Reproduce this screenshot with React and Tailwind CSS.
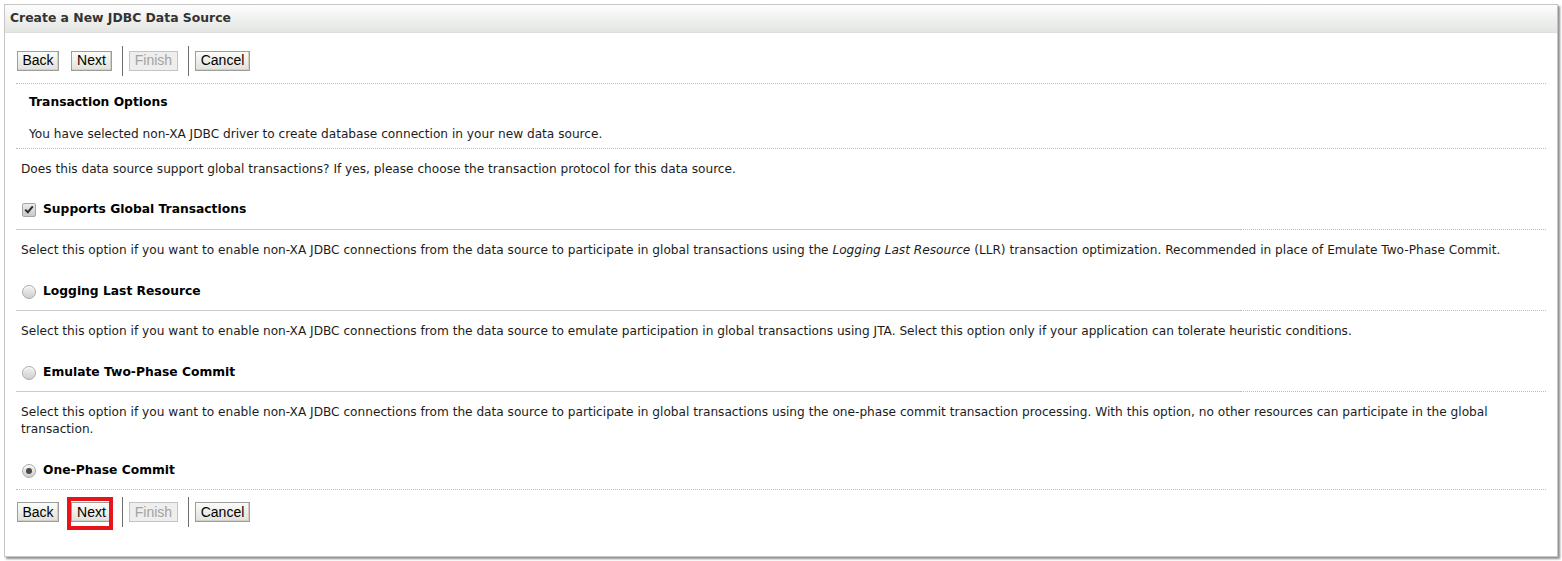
import React from "react";

const REG = "font-['DejaVu_Sans',sans-serif] text-[12.15px] leading-[17px] text-[#1c1c1c]";
const BOLD = "font-['DejaVu_Sans',sans-serif] text-[12.3px] leading-[17px] font-bold text-black";

function Btn({ w, children, disabled }) {
  return (
    <div
      className={`flex h-[20px] items-center justify-center border font-['Liberation_Sans',Arial,sans-serif] text-[14px] ${w} ${
        disabled
          ? "border-[#c4c4c4] bg-[#eeeeec] text-[#a3a3a3]"
          : "border-[#9d9d9d] bg-gradient-to-b from-[#fbfbf8] to-[#e2e2dc] text-black shadow-[inset_-1px_-1px_0_#d0d0c8]"
      }`}
    >
      {children}
    </div>
  );
}

function Sep() {
  return <div className="h-[30px] w-px bg-[#6e6e6e]" />;
}

function ButtonRow({ highlight }) {
  return (
    <div className="relative flex items-center pl-[12px]">
      <Btn w="w-[42px]">Back</Btn>
      <div className="ml-[12px]">
        <Btn w="w-[41px]">Next</Btn>
      </div>
      <div className="ml-[10px]">
        <Sep />
      </div>
      <div className="ml-[6px]">
        <Btn w="w-[49px]" disabled>
          Finish
        </Btn>
      </div>
      <div className="ml-[10px]">
        <Sep />
      </div>
      <div className="ml-[6px]">
        <Btn w="w-[55px]">Cancel</Btn>
      </div>
      {highlight && (
        <div className="absolute left-[62px] top-0 h-[33px] w-[46px] border-[4px] border-[#e8141c]" />
      )}
    </div>
  );
}

function Dotted() {
  return <div className="mx-[11px] border-t border-dotted border-[#bdbdbd]" />;
}

function SplitLine() {
  return (
    <div className="mx-[11px] flex">
      <div className="w-[1224px] border-t border-solid border-[#cccccc]" />
      <div className="flex-1 border-t border-dotted border-[#bdbdbd]" />
    </div>
  );
}

function Radio({ checked }) {
  return (
    <div className="flex h-[14px] w-[14px] items-center justify-center rounded-full border border-[#a9a9a9] bg-gradient-to-b from-[#f2f2f2] to-[#cfcfcf] shadow-[inset_0_1px_1px_#fff]">
      {checked && <div className="h-[6px] w-[6px] rounded-full bg-[#4a4a4a]" />}
    </div>
  );
}

function Checkbox() {
  return (
    <div className="flex h-[14px] w-[14px] items-center justify-center rounded-[2px] border border-[#a5a5a5] bg-gradient-to-b from-[#ececec] to-[#c9c9c9]">
      <svg width="10" height="9" viewBox="0 0 10 9">
        <path d="M1.2 4.6 L3.8 7.2 L8.8 1.4" fill="none" stroke="#2a2a2a" strokeWidth="2" />
      </svg>
    </div>
  );
}

function OptionRow({ control, label, pt }) {
  return (
    <div className={`flex h-[17px] items-center pl-[17px] ${pt}`}>
      <div className="flex w-[21px] items-center">{control}</div>
      <span className={BOLD}>{label}</span>
    </div>
  );
}

export default function App() {
  return (
    <div className="h-[561px] w-[1562px] bg-white pl-[4px] pt-[4px]">
      <div className="h-[553px] w-[1554px] border border-[#c6c6c6] bg-white shadow-[2px_2px_2px_#8f8f8f]">
        <div className="flex h-[28px] items-center border-b border-[#dcdfdb] bg-gradient-to-b from-[#fdfdfd] to-[#e3e6e2] pl-[5px]">
          <span className="font-['DejaVu_Sans',sans-serif] text-[12.4px] font-bold text-[#333333]">
            Create a New JDBC Data Source
          </span>
        </div>

        <div className="flex h-[50px] items-center pt-[5px]">
          <ButtonRow />
        </div>
        <Dotted />

        <div className={`pl-[24px] pt-[10px] ${BOLD}`}>Transaction Options</div>
        <div className={`pl-[24px] pt-[15px] ${REG}`}>
          You have selected non-XA JDBC driver to create database connection in your new data source.
        </div>
        <div className="pt-[5px]">
          <Dotted />
        </div>
        <div className={`pl-[16px] pt-[12px] ${REG}`}>
          Does this data source support global transactions? If yes, please choose the transaction protocol for this data source.
        </div>

        <OptionRow pt="mt-[23px]" control={<Checkbox />} label="Supports Global Transactions" />
        <div className="pt-[11px]">
          <SplitLine />
        </div>
        <div className={`pl-[16px] pt-[12px] ${REG}`}>
          Select this option if you want to enable non-XA JDBC connections from the data source to participate in global
          transactions using the <i>Logging Last Resource</i> (LLR) transaction optimization. Recommended in place of
          Emulate Two-Phase Commit.
        </div>

        <OptionRow pt="mt-[24px]" control={<Radio />} label="Logging Last Resource" />
        <div className="pt-[10px]">
          <SplitLine />
        </div>
        <div className={`pl-[16px] pt-[12px] ${REG}`}>
          Select this option if you want to enable non-XA JDBC connections from the data source to emulate participation in
          global transactions using JTA. Select this option only if your application can tolerate heuristic conditions.
        </div>

        <OptionRow pt="mt-[24px]" control={<Radio />} label="Emulate Two-Phase Commit" />
        <div className="pt-[10px]">
          <SplitLine />
        </div>
        <div className={`pl-[16px] pr-[60px] pt-[12px] ${REG}`}>
          Select this option if you want to enable non-XA JDBC connections from the data source to participate in global
          transactions using the one-phase commit transaction processing. With this option, no other resources can
          participate in the global transaction.
        </div>

        <OptionRow pt="mt-[24px]" control={<Radio checked />} label="One-Phase Commit" />
        <div className="pt-[10px]">
          <Dotted />
        </div>
        <div className="pt-[7px]">
          <ButtonRow highlight />
        </div>
      </div>
    </div>
  );
}
